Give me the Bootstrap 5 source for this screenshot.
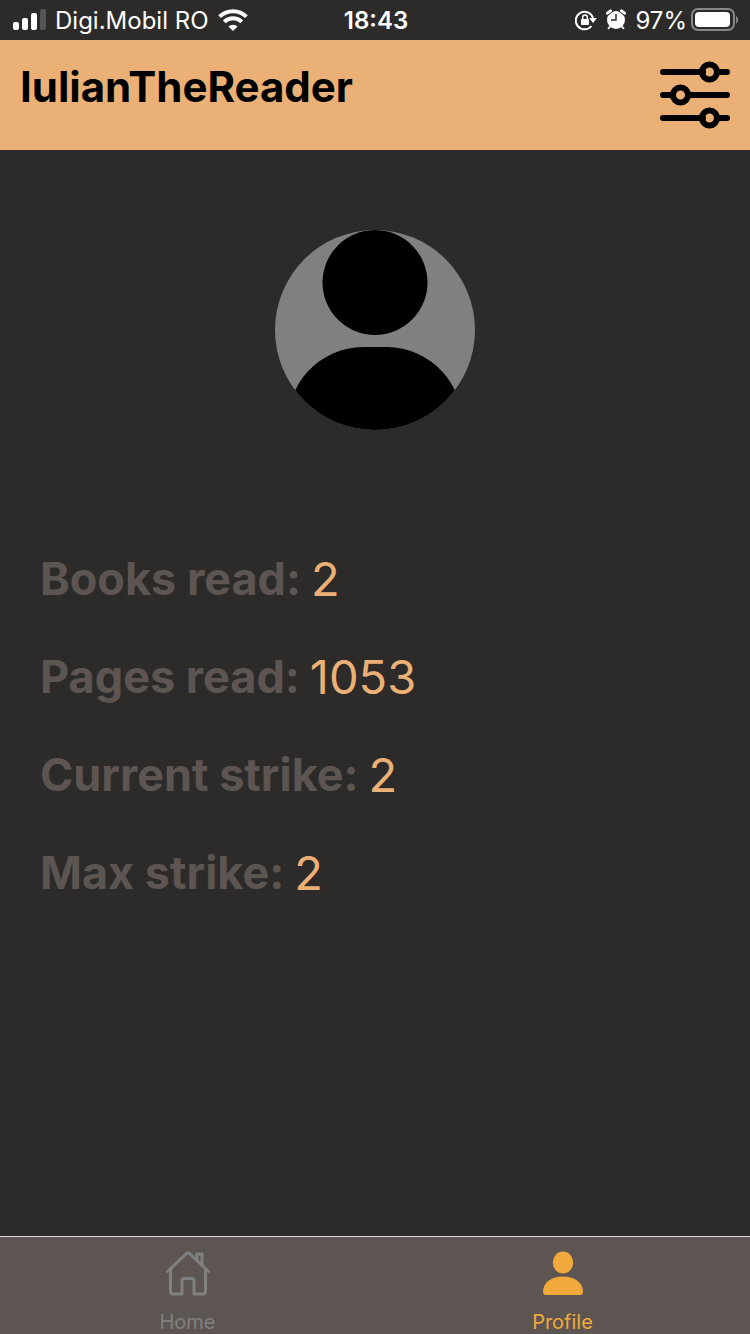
<!DOCTYPE html>
<html lang="en">
<head>
<meta charset="utf-8">
<meta name="viewport" content="width=device-width, initial-scale=1">
<title>Profile</title>
<link href="https://cdn.jsdelivr.net/npm/bootstrap@5.3.0/dist/css/bootstrap.min.css" rel="stylesheet">
<style>
  body { background: #2d2b2a; font-family: Inter, "Liberation Sans", sans-serif; }
  svg { display: block; flex: none; }
  .status-bar { height: 40px; padding: 0 11px 0 13px; font-size: 24px; line-height: 38px; color: #fff; }
  .status-bar span { padding-top: 2px; }
  .status-side { flex: 1 1 0; gap: 9px; }
  .charge { gap: 4px; }
  .app-header { height: 110px; padding: 18px 20px; background: #ebb076; color: #000; }
  .app-title { font-size: 42px; line-height: 58px; font-weight: 700; }
  .profile-main { padding: 80px 40px 40px; }
  .avatar { width: 200px; height: 200px; background: #808080; }
  .stats { margin-top: 120px; gap: 40px; line-height: 58px; }
  .stats div { column-gap: 10px; }
  .stats dt { font-size: 45px; font-weight: 700; color: #5c5552; }
  .stats dd { font-size: 47px; color: #ebb076; }
  .tab-bar { background: #5c5552; border-top: 1px solid #d8d6dc; }
  .tab-bar a { padding: 13px 0 0; gap: 13px; font-size: 20px; line-height: 24px; color: #808080; }
  .tab-bar a.active { color: #f2a93b; }
</style>
</head>
<body>
<div class="d-flex flex-column min-vh-100">
  <div class="status-bar d-flex align-items-center">
    <div class="status-side d-flex align-items-center">
      <svg width="33" height="22" viewBox="0 0 33 22" fill="#fff" aria-hidden="true">
        <rect y="13" width="6" height="8" rx="2"/><rect x="9" y="9" width="6" height="12" rx="2"/><rect x="18" y="4" width="6" height="17" rx="2"/><rect x="27" width="6" height="21" rx="2" fill="#575554"/>
      </svg>
      <span>Digi.Mobil RO</span>
      <svg width="30" height="22" viewBox="0 0 30 22" fill="none" stroke="#fff" stroke-width="4" aria-hidden="true">
        <path d="M1.600 7.700a19 19 0 0 1 26.800 0"/><path d="M6.300 12.800a12.300 12.300 0 0 1 17.400 0"/><path d="M15 22l-4.600-4.500a6.700 6.700 0 0 1 9.200 0z" fill="#fff" stroke="none"/>
      </svg>
    </div>
    <span class="fw-semibold">18:43</span>
    <div class="status-side d-flex align-items-center justify-content-end">
      <svg width="22" height="22" viewBox="0 0 22 22" fill="none" aria-label="Rotation lock" role="img">
        <path d="M16.500 17A8.800 8.800 0 1 1 18 9" stroke="#fff" stroke-width="2"/><path d="M14 9h8l-4 5z" fill="#fff"/>
        <rect x="6" y="10" width="8" height="6" rx="1" fill="#fff"/><path d="M7.700 10.500V8.300a2.300 2.300 0 0 1 4.600 0v2.200" stroke="#fff" stroke-width="1.500"/>
      </svg>
      <svg width="20" height="22" viewBox="0 0 20 22" aria-label="Alarm" role="img">
        <circle cx="10" cy="11" r="9" fill="#fff"/><path d="M1.500 4.500L5 1.800M18.500 4.500L15 1.800" stroke="#2d2b2a" stroke-width="4" stroke-linecap="round"/><path d="M1.500 4.200L4.500 1.800M18.500 4.200L15.500 1.800" stroke="#fff" stroke-width="3" stroke-linecap="round"/><path d="M4 17.500l-1.800 2.500M16 17.500l1.800 2.500" stroke="#fff" stroke-width="2"/>
        <path d="M10 5v6H5" fill="none" stroke="#2d2b2a" stroke-width="1.500"/>
      </svg>
      <div class="charge d-flex align-items-center">
        <span>97%</span>
        <svg width="48" height="24" viewBox="0 0 48 24" aria-label="Battery" role="img">
          <rect x="1" y="1" width="42" height="21" rx="6" fill="none" stroke="#888786" stroke-width="2"/><rect x="4" y="4" width="35" height="15" rx="4" fill="#fff"/><path d="M45 8c2.800 1 2.800 6.500 0 7.500z" fill="#888786"/>
        </svg>
      </div>
    </div>
  </div>

  <header class="app-header d-flex justify-content-between align-items-start">
    <h1 class="app-title m-0">IulianTheReader</h1>
    <button type="button" class="btn p-0 border-0" aria-label="Settings">
      <svg width="70" height="74" viewBox="0 0 70 74" fill="none" stroke="#000" stroke-width="6" stroke-linecap="round">
        <path d="M3 14h40M57 14h10M3 37h10M28 37h39M3 60h40M57 60h10"/><circle cx="49.500" cy="14" r="7.500"/><circle cx="20.500" cy="37" r="7.500"/><circle cx="49.500" cy="60" r="7.500"/>
      </svg>
    </button>
  </header>

  <main class="profile-main flex-fill">
    <div class="avatar rounded-circle overflow-hidden mx-auto">
      <svg width="200" height="200" viewBox="0 0 200 200" role="img" aria-label="Avatar">
        <circle cx="100" cy="52.500" r="52.500"/><path d="M88 117h24a76 76 0 0 1 75 83H13a76 76 0 0 1 75-83z"/>
      </svg>
    </div>
    <dl class="stats d-flex flex-column mb-0">
      <div class="d-flex flex-wrap"><dt>Books read:</dt><dd class="m-0">2</dd></div>
      <div class="d-flex flex-wrap"><dt>Pages read:</dt><dd class="m-0">1053</dd></div>
      <div class="d-flex flex-wrap"><dt>Current strike:</dt><dd class="m-0">2</dd></div>
      <div class="d-flex flex-wrap"><dt>Max strike:</dt><dd class="m-0">2</dd></div>
    </dl>
  </main>

  <nav class="tab-bar d-flex">
    <a href="#" class="col d-flex flex-column align-items-center text-decoration-none">
      <svg width="48" height="47" viewBox="0 0 48 47" fill="none" stroke="currentColor" stroke-width="3" stroke-linecap="round" stroke-linejoin="round" aria-hidden="true">
        <path d="M3.500 21.500L22.500 3.500q1.500-1.300 3 0l19 18"/><path d="M6.500 19v22.500q0 2.500 2.500 2.500h9V31q0-2.500 2.500-2.500h7q2.500 0 2.500 2.500v13h9q2.500 0 2.500-2.500V19"/><path d="M33 10V4h5v11" stroke-linejoin="miter"/>
      </svg>
      <span>Home</span>
    </a>
    <a href="#" class="active col d-flex flex-column align-items-center text-decoration-none" aria-current="page">
      <svg width="48" height="47" viewBox="0 0 48 47" fill="currentColor" aria-hidden="true">
        <ellipse cx="24" cy="12.500" rx="10.200" ry="11"/><path d="M4 42C4 32 13 26.500 24 26.500s20 5.500 20 15.500q0 3-3 3H7q-3 0-3-3z"/>
      </svg>
      <span>Profile</span>
    </a>
  </nav>
</div>
<script src="https://cdn.jsdelivr.net/npm/bootstrap@5.3.0/dist/js/bootstrap.bundle.min.js"></script>
</body>
</html>
